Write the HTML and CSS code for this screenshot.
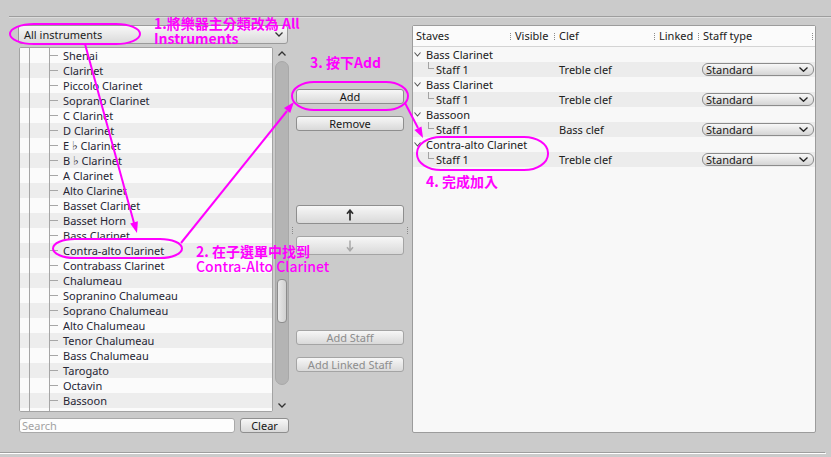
FILE: index.html
```html
<!DOCTYPE html>
<html lang="zh-Hant">
<head>
  <meta charset="UTF-8">
  <title>Instruments</title>
  <link rel="stylesheet" href="styles.css">
</head>
<body>
  <div class="window">
    <div class="rule"></div>

    <div class="panes">
      <!-- instrument picker -->
      <div class="picker">
        <div class="combo">
          <span>All instruments</span>
          <svg width="8" height="5" viewBox="0 0 8 5"><path d="M0.5 0.5 L4 4 L7.5 0.5" fill="none" stroke="#333" stroke-width="1.3"/></svg>
        </div>
        <div class="listarea">
          <ul class="instruments">
            <li>Shenai</li>
            <li>Clarinet</li>
            <li>Piccolo Clarinet</li>
            <li>Soprano Clarinet</li>
            <li>C Clarinet</li>
            <li>D Clarinet</li>
            <li>E <span class="flat">♭</span> Clarinet</li>
            <li>B <span class="flat">♭</span> Clarinet</li>
            <li>A Clarinet</li>
            <li>Alto Clarinet</li>
            <li>Basset Clarinet</li>
            <li>Basset Horn</li>
            <li>Bass Clarinet</li>
            <li>Contra-alto Clarinet</li>
            <li>Contrabass Clarinet</li>
            <li>Chalumeau</li>
            <li>Sopranino Chalumeau</li>
            <li>Soprano Chalumeau</li>
            <li>Alto Chalumeau</li>
            <li>Tenor Chalumeau</li>
            <li>Bass Chalumeau</li>
            <li>Tarogato</li>
            <li>Octavin</li>
            <li>Bassoon</li>
            <li>Contrabassoon</li>
          </ul>
          <div class="vscroll">
            <div class="step">
              <svg width="8" height="5" viewBox="0 0 8 5"><path d="M0.5 4.5 L4 1 L7.5 4.5" fill="none" stroke="#333" stroke-width="1.3"/></svg>
            </div>
            <div class="track"><div class="thumb"></div></div>
            <div class="step down">
              <svg width="8" height="5" viewBox="0 0 8 5"><path d="M0.5 0.5 L4 4 L7.5 0.5" fill="none" stroke="#333" stroke-width="1.3"/></svg>
            </div>
          </div>
        </div>
        <div class="searchrow">
          <input class="search" type="text" placeholder="Search">
          <button class="btn clear">Clear</button>
        </div>
      </div>

      <!-- add / remove buttons -->
      <div class="actions">
        <button class="btn add">Add</button>
        <button class="btn remove">Remove</button>
        <button class="btn tall up">
          <svg width="8" height="12" viewBox="0 0 8 12"><path d="M4 11.5 V1.5 M1 4.8 L4 1.2 L7 4.8" fill="none" stroke="#2e2e2e" stroke-width="1.7"/></svg>
        </button>
        <button class="btn tall down" disabled>
          <svg width="8" height="12" viewBox="0 0 8 12"><path d="M4 0.5 V10.5 M1 7.2 L4 10.8 L7 7.2" fill="none" stroke="#a9a9a9" stroke-width="1.5"/></svg>
        </button>
        <button class="btn addstaff" disabled>Add Staff</button>
        <button class="btn linked" disabled>Add Linked Staff</button>
      </div>

      <!-- staves tree -->
      <div class="staves">
        <div class="head">
          <div class="c-staves">Staves</div>
          <div>Visible</div>
          <div>Clef</div>
          <div>Linked</div>
          <div class="c-type">Staff type</div>
        </div>

        <div class="parent">
          <svg width="7" height="5" viewBox="0 0 7 5"><path d="M0.5 0.5 L3.5 4 L6.5 0.5" fill="none" stroke="#555" stroke-width="1.1"/></svg>
          Bass Clarinet
        </div>
        <div class="row">
          <div class="c-staves">Staff 1</div>
          <div></div>
          <div class="c-clef">Treble clef</div>
          <div></div>
          <div><div class="typebox">Standard<svg width="9" height="5" viewBox="0 0 9 5"><path d="M0.5 0.5 L4.5 4.3 L8.5 0.5" fill="none" stroke="#222" stroke-width="1.3"/></svg></div></div>
        </div>

        <div class="parent">
          <svg width="7" height="5" viewBox="0 0 7 5"><path d="M0.5 0.5 L3.5 4 L6.5 0.5" fill="none" stroke="#555" stroke-width="1.1"/></svg>
          Bass Clarinet
        </div>
        <div class="row">
          <div class="c-staves">Staff 1</div>
          <div></div>
          <div class="c-clef">Treble clef</div>
          <div></div>
          <div><div class="typebox">Standard<svg width="9" height="5" viewBox="0 0 9 5"><path d="M0.5 0.5 L4.5 4.3 L8.5 0.5" fill="none" stroke="#222" stroke-width="1.3"/></svg></div></div>
        </div>

        <div class="parent">
          <svg width="7" height="5" viewBox="0 0 7 5"><path d="M0.5 0.5 L3.5 4 L6.5 0.5" fill="none" stroke="#555" stroke-width="1.1"/></svg>
          Bassoon
        </div>
        <div class="row">
          <div class="c-staves">Staff 1</div>
          <div></div>
          <div class="c-clef">Bass clef</div>
          <div></div>
          <div><div class="typebox">Standard<svg width="9" height="5" viewBox="0 0 9 5"><path d="M0.5 0.5 L4.5 4.3 L8.5 0.5" fill="none" stroke="#222" stroke-width="1.3"/></svg></div></div>
        </div>

        <div class="parent">
          <svg width="7" height="5" viewBox="0 0 7 5"><path d="M0.5 0.5 L3.5 4 L6.5 0.5" fill="none" stroke="#555" stroke-width="1.1"/></svg>
          Contra-alto Clarinet
        </div>
        <div class="row">
          <div class="c-staves">Staff 1</div>
          <div></div>
          <div class="c-clef">Treble clef</div>
          <div></div>
          <div><div class="typebox">Standard<svg width="9" height="5" viewBox="0 0 9 5"><path d="M0.5 0.5 L4.5 4.3 L8.5 0.5" fill="none" stroke="#222" stroke-width="1.3"/></svg></div></div>
        </div>
      </div>
    </div>

    <div class="rule bottom"></div>

    <!-- tutorial marks drawn over the dialog -->
    <svg class="marks" width="831" height="457" viewBox="0 0 831 457">
      <g fill="none" stroke="#ff00ff" stroke-width="2">
        <rect x="10" y="24" width="130" height="20" rx="24" ry="10"/>
        <rect x="53" y="239" width="129" height="19" rx="22" ry="9.5"/>
        <rect x="292" y="82" width="116" height="28" rx="22" ry="14"/>
        <rect x="417" y="137" width="131" height="33" rx="24" ry="16"/>
        <line x1="85" y1="44" x2="134" y2="223"/>
        <line x1="181" y1="243" x2="287" y2="111"/>
        <line x1="405" y1="103" x2="418" y2="128"/>
      </g>
      <g fill="#ff00ff">
        <polygon points="137,233 130.2,223.5 137.9,221.3"/>
        <polygon points="294,102 290.2,113.1 284,108.1"/>
        <polygon points="423,138 414.4,130 421.5,126.4"/>
      </g>
    </svg>
    <div class="note n1">1.將樂器主分類改為 All<br>Instruments</div>
    <div class="note n2">2. 在子選單中找到<br><span class="sub">Contra-Alto Clarinet</span></div>
    <div class="note n3">3. 按下Add</div>
    <div class="note n4">4. 完成加入</div>
  </div>
</body>
</html>
```

FILE: styles.css
```css
* {
  box-sizing: border-box;
}
body {
  margin: 0;
  background: #cbcbcb;
  font-family: "Noto Sans", "DejaVu Sans", sans-serif;
  font-size: 11px;
  color: #262634;
}
.window {
  position: relative;
  width: 831px;
  height: 457px;
  padding-top: 16px;
  overflow: hidden;
}
.rule {
  margin-left: 9px;
  border-top: 1px solid #9e9e9e;
  border-bottom: 1px solid #dcdcdc;
}
.rule.bottom {
  margin: 19px 5px 0 0;
  border-bottom-color: #fff;
  border-right: 1px solid #fff;
}
.panes {
  display: flex;
  align-items: flex-start;
  height: 408px;
  margin-top: 7px;
  padding-left: 18px;
}

/* left: instrument picker */
.picker {
  width: 271px;
  display: flex;
  flex-direction: column;
}
.combo {
  width: 270px;
  height: 19px;
  display: flex;
  align-items: center;
  justify-content: space-between;
  padding: 0 4px 0 5px;
  border: 1px solid #9a9a9a;
  border-radius: 3px;
  background: linear-gradient(#f8f8f8, #dadada);
  color: #1c1c1c;
}
.listarea {
  display: flex;
  height: 365px;
  margin-top: 3px;
}
.instruments {
  list-style: none;
  margin: 0 0 0 1px;
  padding: 0;
  width: 254px;
  border: 1px solid #a3a3a3;
  border-radius: 2px;
  background: #fafafa;
  overflow: hidden;
}
.instruments li {
  height: 15px;
  line-height: 15px;
  padding-left: 43px;
  white-space: nowrap;
  background:
    linear-gradient(#a6a6a6, #a6a6a6) 9px 0 / 1px 100% no-repeat,
    linear-gradient(#a6a6a6, #a6a6a6) 29px 0 / 1px 100% no-repeat,
    linear-gradient(#a6a6a6, #a6a6a6) 29px 7px / 9px 1px no-repeat,
    #fbfbfb;
}
.instruments li:nth-child(even) {
  background-color: #ededed;
}
.flat {
  font-family: "DejaVu Sans", sans-serif;
  font-size: 12px;
}
.vscroll {
  width: 14px;
  margin-left: 2px;
  display: flex;
  flex-direction: column;
  align-items: center;
}
.step {
  height: 13px;
  display: flex;
  align-items: center;
  justify-content: center;
}
.step.down {
  height: 15px;
  padding-top: 2px;
}
.track {
  width: 14px;
  height: 337px;
  margin-top: 1px;
  display: flex;
  justify-content: center;
  border: 1px solid #a8a8a8;
  border-radius: 7px;
  background: #b4b4b4;
}
.thumb {
  width: 10px;
  height: 44px;
  margin-top: 217px;
  border: 1px solid #8c8c8c;
  border-radius: 4px;
  background: linear-gradient(90deg, #e8e8e8, #d0d0d0);
}
.searchrow {
  display: flex;
  margin: 6px 0 0 1px;
}
.search {
  width: 216px;
  height: 15px;
  padding: 0 2px;
  border: 1px solid #a9a9a9;
  border-radius: 3px;
  background: #fdfdfd;
  font: inherit;
  outline: none;
}
.search::placeholder {
  color: #a2a2a2;
}

/* buttons */
.btn {
  width: 108px;
  height: 15px;
  padding: 0;
  display: flex;
  align-items: center;
  justify-content: center;
  border: 1px solid #8e8e8e;
  border-radius: 3px;
  background: linear-gradient(#f7f7f7, #d9d9d9);
  font: inherit;
  color: #161616;
}
.btn:disabled {
  color: #8d8d8d;
  border-color: #a4a4a4;
}
.clear {
  width: 49px;
  margin-left: 5px;
}
.actions {
  width: 123px;
  height: 100%;
  padding-left: 7px;
  display: flex;
  flex-direction: column;
  background:
    repeating-linear-gradient(#8a8a8a 0 1px, transparent 1px 2px) 3px 202px / 1px 7px no-repeat,
    repeating-linear-gradient(#8a8a8a 0 1px, transparent 1px 2px) 118px 202px / 1px 7px no-repeat;
}
.add {
  margin-top: 64px;
}
.remove {
  margin-top: 12px;
}
.tall {
  height: 19px;
}
.up {
  margin-top: 74px;
}
.down {
  margin-top: 12px;
}
.addstaff {
  margin-top: 75px;
}
.linked {
  margin-top: 12px;
}

/* right: staves tree */
.staves {
  width: 404px;
  height: 408px;
  border: 1px solid #9c9c9c;
  border-radius: 2px;
  background: #f8f8f8;
  color: #202020;
}
.head,
.row {
  display: grid;
  grid-template-columns: 97px 44px 100px 44px 1fr;
}
.head {
  height: 21px;
  border-bottom: 1px solid #d4d4d4;
  background: #fbfbfb;
}
.head div {
  line-height: 20px;
  padding-left: 5px;
  background: repeating-linear-gradient(#8c8c8c 0 1px, transparent 1px 2px) 0 7px / 1px 7px no-repeat;
}
.head .c-staves {
  padding-left: 3px;
  background: none;
}
.head .c-type {
  background:
    repeating-linear-gradient(#8c8c8c 0 1px, transparent 1px 2px) 0 7px / 1px 7px no-repeat,
    repeating-linear-gradient(#8c8c8c 0 1px, transparent 1px 2px) 114px 7px / 1px 7px no-repeat;
}
.parent {
  height: 15px;
  display: flex;
  align-items: center;
  gap: 5px;
  padding-left: 1px;
  white-space: nowrap;
}
.row {
  height: 15px;
  line-height: 15px;
  background: #ececec;
}
.row .c-staves {
  padding-left: 23px;
  background:
    linear-gradient(#a3a3a3, #a3a3a3) 15px 0 / 1px 7px no-repeat,
    linear-gradient(#a3a3a3, #a3a3a3) 15px 6px / 6px 1px no-repeat;
}
.c-clef {
  padding-left: 5px;
  white-space: nowrap;
}
.typebox {
  width: 112px;
  height: 13px;
  margin: 1px 0 0 4px;
  display: flex;
  align-items: center;
  justify-content: space-between;
  padding: 0 5px 0 3px;
  border: 1px solid #8c8c8c;
  border-radius: 6px;
  background: linear-gradient(#f8f8f8, #d5d5d5);
  line-height: 11px;
  color: #1a1a1a;
}

/* tutorial marks */
.marks {
  position: absolute;
  left: 0;
  top: 0;
  pointer-events: none;
}
.note {
  position: absolute;
  color: #ff00ff;
  font-family: "Noto Sans CJK TC", sans-serif;
  font-weight: 700;
  font-size: 14px;
  line-height: 15px;
  white-space: nowrap;
}
.note .sub {
  font-weight: 500;
}
.n1 {
  left: 154px;
  top: 16px;
}
.n2 {
  left: 196px;
  top: 244px;
}
.n3 {
  left: 310px;
  top: 55px;
}
.n4 {
  left: 426px;
  top: 174px;
}
```
